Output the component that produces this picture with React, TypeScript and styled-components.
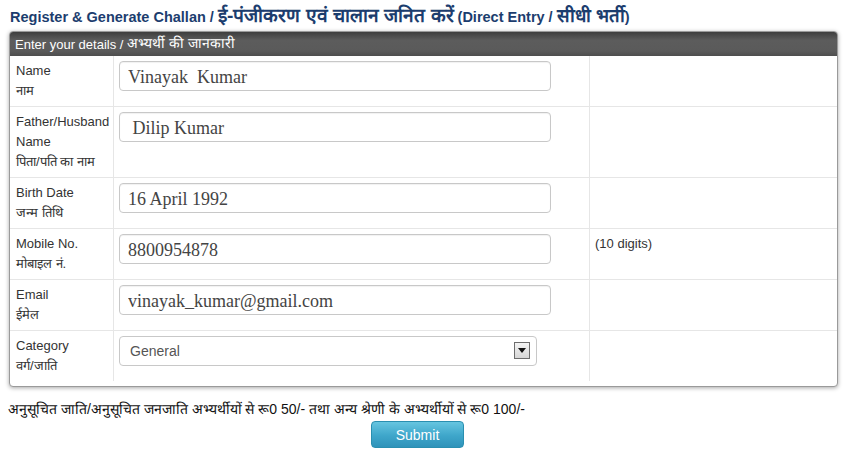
import React from "react";
import styled, { createGlobalStyle } from "styled-components";

const GlobalStyle = createGlobalStyle`
  html, body { margin: 0; padding: 0; background: #fff; }
  body { font-family: Arial, "Liberation Sans", sans-serif; color: #333; }
  * { box-sizing: border-box; }
`;

const Page = styled.div`
  padding: 6px 11px 0 9px;
  width: 849px;
`;

const Title = styled.h1`
  margin: 0 0 7px 1px;
  height: 18px;
  font-family: Arial, "Liberation Sans", sans-serif;
  font-size: 14.5px;
  line-height: 18px;
  font-weight: bold;
  color: #1c3d6e;
  white-space: nowrap;
`;

const Hindi = styled.span<{ $scale?: number }>`
  font-size: ${(p) => p.$scale ?? 1}em;
  line-height: 1;
`;

const Panel = styled.div`
  border: 1px solid #9a9a9a;
  border-radius: 4px;
  box-shadow: 0 1px 4px rgba(0, 0, 0, 0.35);
  background: #fff;
  overflow: hidden;
`;

const PanelHeader = styled.div`
  height: 24px;
  padding: 0 5px;
  display: flex;
  align-items: center;
  color: #fff;
  font-size: 13px;
  white-space: pre;
  background: linear-gradient(#3e3e3e, #5c5c5c 35%, #5a5a5a 80%, #4e4e4e);
`;

const Grid = styled.div`
  display: grid;
  grid-template-columns: 104px 476px 1fr;
  padding-bottom: 5px;
`;

const Cell = styled.div<{ $last?: boolean; $lastRow?: boolean }>`
  padding: 5px;
  border-right: ${(p) => (p.$last ? "none" : "1px solid #e6e6e6")};
  border-bottom: ${(p) => (p.$lastRow ? "none" : "1px solid #e6e6e6")};
`;

const LabelCell = styled(Cell)`
  padding-left: 6px;
  font-size: 13px;
  line-height: 20px;
  color: #333;
`;

const HintCell = styled(Cell)`
  font-size: 13px;
  line-height: 20px;
  color: #333;
`;

const TextInput = styled.input`
  display: block;
  width: 432px;
  height: 30px;
  padding: 2px 8px 0;
  border: 1px solid #c8c8c8;
  border-radius: 4px;
  box-shadow: inset 0 1px 1px rgba(0, 0, 0, 0.06);
  font-family: "Liberation Serif", "Times New Roman", serif;
  font-size: 18px;
  color: #444;
  background: #fff;
  outline: none;
`;

const SelectWrap = styled.div`
  position: relative;
  width: 418px;
  height: 30px;
`;

const Select = styled.select`
  appearance: none;
  width: 100%;
  height: 100%;
  padding: 0 10px;
  border: 1px solid #c8c8c8;
  border-radius: 4px;
  font-family: Arial, "Liberation Sans", sans-serif;
  font-size: 14px;
  color: #555;
  background: #fff;
  outline: none;
`;

const Arrow = styled.span`
  position: absolute;
  right: 7px;
  top: 6px;
  width: 16px;
  height: 17px;
  border: 1px solid #6d6d6d;
  background: linear-gradient(#f4f4f4, #d6d6d6);
  display: flex;
  align-items: center;
  justify-content: center;
  pointer-events: none;
`;

const Note = styled.p`
  margin: 14px 0 0 -1px;
  height: 16px;
  font-size: 14px;
  line-height: 16px;
  color: #111;
  white-space: nowrap;
`;

const ButtonRow = styled.div`
  display: flex;
  justify-content: center;
  padding-right: 12px;
  margin-top: 4px;
`;

const SubmitButton = styled.button`
  width: 93px;
  height: 27px;
  border: 1px solid #2a8fb0;
  border-radius: 4px;
  background: linear-gradient(#66c5e0, #3ea6ca 55%, #2f93ba);
  color: #fff;
  font-family: Arial, "Liberation Sans", sans-serif;
  font-size: 14px;
  cursor: pointer;
`;

type Row = {
  label: string[];
  value?: string;
  select?: string;
  hint?: string;
};

const rows: Row[] = [
  { label: ["Name", "नाम"], value: "Vinayak  Kumar" },
  { label: ["Father/Husband", "Name", "पिता/पति का नाम"], value: " Dilip Kumar" },
  { label: ["Birth Date", "जन्म तिथि"], value: "16 April 1992" },
  { label: ["Mobile No.", "मोबाइल नं."], value: "8800954878", hint: "(10 digits)" },
  { label: ["Email", "ईमेल"], value: "vinayak_kumar@gmail.com" },
  { label: ["Category", "वर्ग/जाति"], select: "General" },
];

export default function App() {
  return (
    <>
      <GlobalStyle />
      <Page>
        <Title>
          Register &amp; Generate Challan / <Hindi $scale={1.32}>ई-पंजीकरण एवं चालान जनित करें</Hindi>{" "}
          (Direct Entry / <Hindi $scale={1.28}>सीधी भर्ती</Hindi>)
        </Title>
        <Panel>
          <PanelHeader>
            Enter your details / <Hindi $scale={1.07}>अभ्यर्थी की जानकारी</Hindi>
          </PanelHeader>
          <Grid>
            {rows.map((r, i) => {
              const lastRow = i === rows.length - 1;
              return (
                <React.Fragment key={i}>
                  <LabelCell $lastRow={lastRow}>
                    {r.label.map((l, j) => (
                      <div key={j}>{l}</div>
                    ))}
                  </LabelCell>
                  <Cell $lastRow={lastRow}>
                    {r.select ? (
                      <SelectWrap>
                        <Select defaultValue={r.select}>
                          <option>General</option>
                          <option>OBC</option>
                          <option>SC</option>
                          <option>ST</option>
                        </Select>
                        <Arrow>
                          <svg width="8" height="5" viewBox="0 0 8 5">
                            <path d="M0 0 H8 L4 5 Z" fill="#111" />
                          </svg>
                        </Arrow>
                      </SelectWrap>
                    ) : (
                      <TextInput defaultValue={r.value} readOnly />
                    )}
                  </Cell>
                  <HintCell $last $lastRow={lastRow}>
                    {r.hint}
                  </HintCell>
                </React.Fragment>
              );
            })}
          </Grid>
        </Panel>
        <Note>
          अनुसूचित जाति/अनुसूचित जनजाति अभ्यर्थीयों से रू0 50/- तथा अन्य श्रेणी के अभ्यर्थीयों से रू0 100/-
        </Note>
        <ButtonRow>
          <SubmitButton>Submit</SubmitButton>
        </ButtonRow>
      </Page>
    </>
  );
}
